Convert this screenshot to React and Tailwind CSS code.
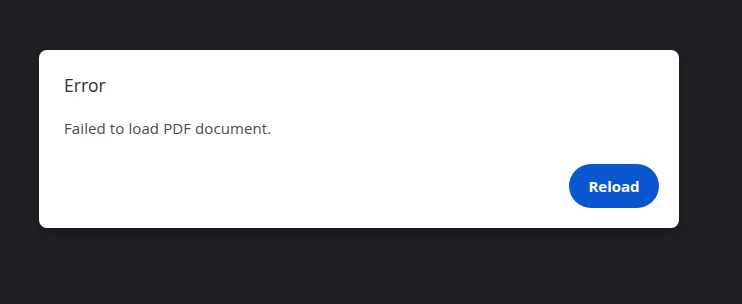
export default function App() {
  return (
    <div className="w-[742px] h-[304px] bg-[#202124] pt-[50px] pl-[39px]" style={{ fontFamily: '"Open Sans", "Noto Sans", sans-serif' }}>
      <div className="w-[640px] h-[178px] bg-white rounded-[8px] shadow-[0_4px_16px_rgba(0,0,0,0.35)] flex flex-col pt-[22px] pl-[25px] pr-[20px] pb-[20px]">
        <h2 className="text-[17.5px] leading-[26px] text-[#303134] font-normal">Error</h2>
        <p className="mt-[20px] text-[15px] leading-[20px] text-[#4a4d51] tracking-[0.1px]">Failed to load PDF document.</p>
        <div className="mt-auto flex justify-end">
          <button className="w-[90px] h-[44px] rounded-full bg-[#0b57d0] text-white text-[15px] font-bold">
            Reload
          </button>
        </div>
      </div>
    </div>
  )
}
